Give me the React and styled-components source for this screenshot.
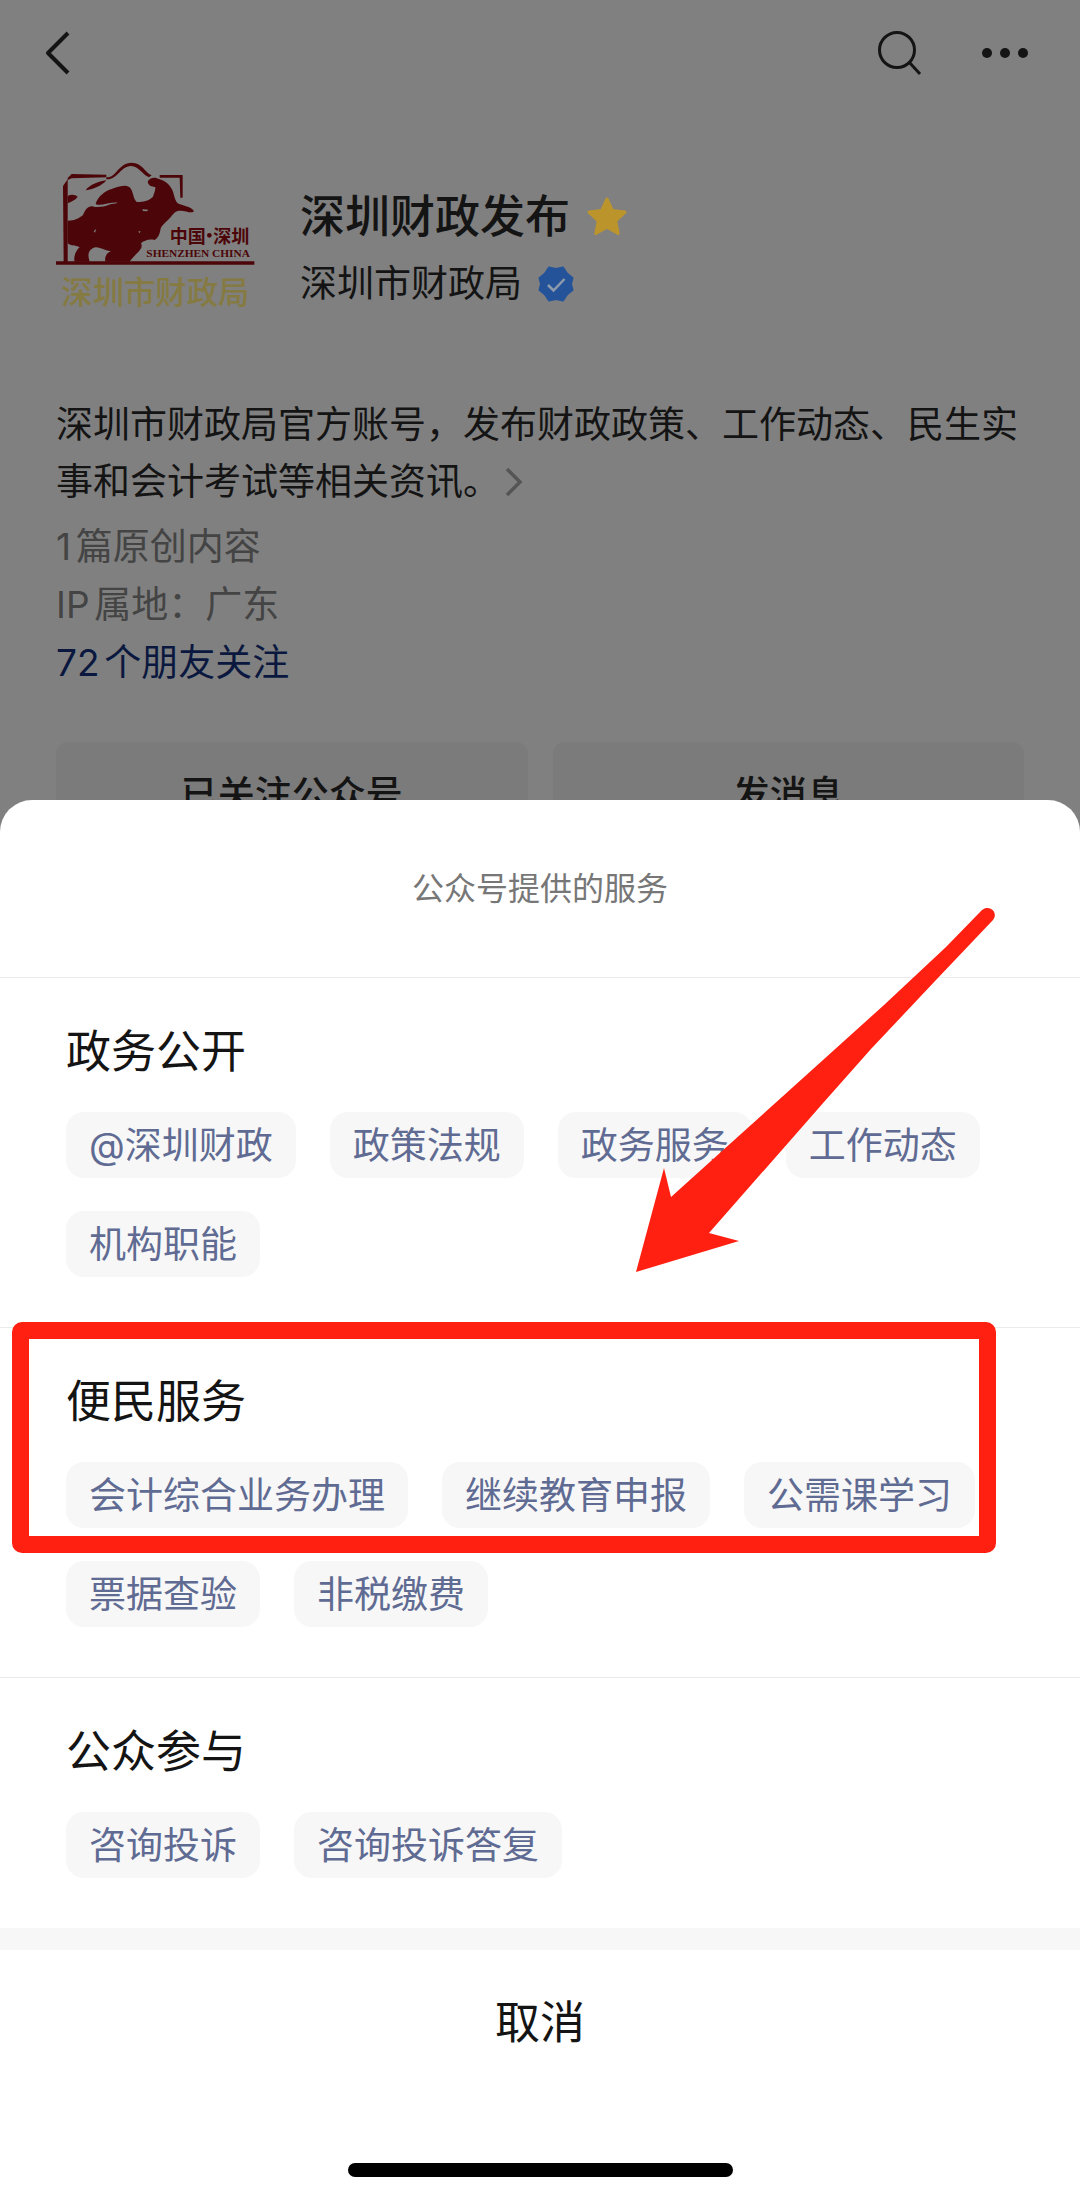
import React from 'react';
import styled, { createGlobalStyle } from 'styled-components';

const colors = {
	dimmed: '#808080',
	dimmedButton: '#7b7b7b',
	ink: '#141414',
	inkSoft: '#444',
	navy: '#0a183f',
	chip: '#f7f7f7',
	chipText: '#5f6b92',
	line: '#ebebeb',
	red: '#ff2012',
	logoRed: '#4c0609',
	logoGold: '#857a42',
};

const GlobalStyle = createGlobalStyle`
	* {
		box-sizing: border-box;
	}
	body {
		margin: 0;
		background-color: ${colors.dimmed};
		font-family: Inter, 'Noto Sans CJK SC', sans-serif;
		color: ${colors.ink};
		text-autospace: normal;
	}
	button {
		font: inherit;
		line-height: 1;
		color: inherit;
		border: none;
		background: none;
		padding: 0;
	}
	h1, h2, h3, p {
		margin: 0;
		font-weight: 400;
	}
	svg {
		display: block;
		flex-shrink: 0;
	}
`;

const Screen = styled.div`
	min-height: 100vh;
	display: flex;
	flex-direction: column;
	overflow: hidden;
`;

const NavBar = styled.nav`
	height: 105px;
	padding: 0 50px 0 42px;
	display: flex;
	align-items: center;
`;

const NavButton = styled.button`
	display: flex;
`;

const NavGroup = styled.div`
	display: flex;
	align-items: center;
	gap: 58px;
	margin-left: auto;
`;

const Profile = styled.main`
	padding: 55px 56px 0;
`;

const Identity = styled.header`
	display: flex;
	align-items: flex-start;
	gap: 44px;
`;

const Names = styled.div`
	display: flex;
	flex-direction: column;
	gap: 12px;
	padding-top: 27px;
`;

const NameRow = styled.div`
	display: flex;
	align-items: center;
	gap: 16px;
`;

const AccountName = styled.h1`
	font-size: 45px;
	line-height: 60px;
	font-weight: 500;
`;

const Owner = styled.p`
	font-size: 37px;
	line-height: 50px;
`;

const Description = styled.p`
	margin-top: 83px;
	font-size: 37px;
	line-height: 57px;

	svg {
		display: inline-block;
		margin-left: 4px;
		vertical-align: -3px;
	}
`;

const Meta = styled.div`
	display: flex;
	flex-direction: column;
	align-items: flex-start;
	margin-top: 8px;
	font-size: 37px;
	line-height: 58px;
	color: ${colors.inkSoft};
`;

const FriendsLink = styled.a`
	color: ${colors.navy};
	text-decoration: none;
`;

const Actions = styled.div`
	display: grid;
	grid-template-columns: 1fr 1fr;
	gap: 25px;
	margin-top: 50px;
`;

const ActionButton = styled.button`
	height: 105px;
	border-radius: 12px;
	background-color: ${colors.dimmedButton};
	font-size: 37px;
	font-weight: 500;
`;

// slides over the lower half of the action buttons
const Sheet = styled.section`
	position: relative;
	flex: 1;
	display: flex;
	flex-direction: column;
	margin-top: -47px;
	border-radius: 32px 32px 0 0;
	background-color: #fff;
`;

const SheetTitle = styled.h2`
	display: flex;
	align-items: center;
	justify-content: center;
	height: 177px;
	font-size: 32px;
	line-height: 1;
	color: #777;
`;

const Group = styled.section`
	position: relative;
	padding: 44px 66px 50px;
	border-top: 1px solid ${colors.line};
`;

const GroupTitle = styled.h3`
	margin-bottom: 30px;
	font-size: 45px;
	line-height: 60px;
`;

const Chips = styled.div`
	display: flex;
	flex-wrap: wrap;
	gap: 33px 34px;
`;

const Chip = styled.button`
	height: 66px;
	padding: 0 23px;
	border-radius: 18px;
	background-color: ${colors.chip};
	font-size: 37px;
	color: ${colors.chipText};
	white-space: nowrap;
`;

const Highlight = styled.div`
	position: absolute;
	top: -6px;
	left: 12px;
	width: 984px;
	height: 231px;
	border: 17px solid ${colors.red};
	border-radius: 10px;
	pointer-events: none;
`;

const ArrowMark = styled.svg`
	position: absolute;
	top: 99px;
	left: 630px;
	z-index: 1;
	pointer-events: none;
`;

const Cancel = styled.button`
	height: 167px;
	border-top: 22px solid ${colors.chip};
	font-size: 45px;
`;

const HomeBar = styled.div`
	width: 385px;
	height: 14px;
	margin: auto auto 18px;
	border-radius: 7px;
	background-color: #000;
`;

const groups = [
	{
		title: '政务公开',
		items: ['@深圳财政', '政策法规', '政务服务', '工作动态', '机构职能'],
	},
	{
		title: '便民服务',
		items: ['会计综合业务办理', '继续教育申报', '公需课学习', '票据查验', '非税缴费'],
		highlighted: true,
	},
	{
		title: '公众参与',
		items: ['咨询投诉', '咨询投诉答复'],
	},
];

const BackIcon = () => (
	<svg width='32' height='48' viewBox='0 0 32 48' fill='none'>
		<path d='M26 4 6 24l20 20' stroke={colors.ink} strokeWidth='4' strokeLinejoin='round' />
	</svg>
);

const SearchIcon = () => (
	<svg width='46' height='48' viewBox='0 0 46 48' fill='none' stroke={colors.ink} strokeWidth='3'>
		<circle cx='21' cy='21' r='17.500' />
		<path d='M33 33l11 12' />
	</svg>
);

const MoreIcon = () => (
	<svg width='50' height='12' viewBox='0 0 50 12' fill={colors.ink}>
		<circle cx='7' cy='6' r='5' />
		<circle cx='25' cy='6' r='5' />
		<circle cx='43' cy='6' r='5' />
	</svg>
);

const StarIcon = () => (
	<svg width='42' height='42' viewBox='0 0 42 42'>
		<path
			d='M21 3l5.400 11.600 12.600 1.500-9.300 8.700 2.500 12.700L21 31.200 9.800 37.500l2.500-12.700L3 16.100l12.600-1.500z'
			fill='#bb952b'
			stroke='#bb952b'
			strokeWidth='3'
			strokeLinejoin='round'
		/>
	</svg>
);

const VerifiedIcon = () => (
	<svg width='36' height='38' viewBox='0 0 36 38'>
		<path
			d='M11 2.500 18 4l7-1.500 4 6 5.500 4.500-1.500 6 1.500 6-5.500 4.500-4 6L18 34l-7 1.500-4-6L1.500 25 3 19l-1.500-6L7 8.500z'
			fill='#24539a'
			stroke='#24539a'
			strokeWidth='2'
			strokeLinejoin='round'
		/>
		<path d='M10 20l5.500 5.500L26.500 14' fill='none' stroke='#8f9bad' strokeWidth='2.500' />
	</svg>
);

const ChevronIcon = () => (
	<svg width='20' height='32' viewBox='0 0 20 32' fill='none'>
		<path d='M3 3l13 13L3 29' stroke='#555' strokeWidth='3.500' />
	</svg>
);

const Logo = () => (
	<svg width='200' height='153' viewBox='47 30 600 459' role='img' aria-label='深圳市财政局'>
		<g fill={colors.logoRed}>
			<path d='M68 108l14-20v248H70z' />
			<path d='M82 84l12-12 104 2v8l-104 3-12 5z' />
			<path d='M82 138c10-6 22-5 30 2-6 10-18 14-30 20z' />
			<path d='M136 121c10-16 38-26 62-30-12 16-38 26-62 30z' />
			<path d='M198 82c30 2 34-42 76-44 32 0 38 28 60 38l-8 6c-20-8-30-34-54-34-34 2-40 42-74 40z' />
			<path d='M358 75h69v68h-7l-2-60h-60z' />
			<path d='M45 334h597v10H45z' />
			<path d='M322 95c6-13 22-15 36-7 18 4 34 20 40 37 4 15 7 27 14 35 18 8 40 9 49 24-8 8-24-2-41-2-15 0-20 8-28 18-12 15-30 25-32 40s-10 28-18 30c-17-4-32 3-40 10 6 10-2 20-12 30s-18 18-22 25h-73c-3-15 5-27 17-31-22-4-37-14-47-12-20 6-25 20-17 43h-45c-5-15 5-35 15-43-13-7-23-2-36-12v-68c23 0 33-7 46-17 7-17 17-30 32-25 16 2 32 0 46-6 10-4 18-2 26-6-22-2-54 12-66 4 4-17 19-32 39-42 20-8 50-20 63-8 12 13 9 31 20 43 22 3 40-5 50-15 6-15 7-22 7-28-4-4-20 0-23-17z' />
		</g>
		<g fill={colors.dimmed}>
			<path d='M306 178l18 1-4 5-12-1z' />
			<path d='M160 244l8-8-4 12z' />
			<path d='M294 244l7 0-4 6z' />
		</g>
		<g fill={colors.logoRed} fontFamily="'Noto Sans CJK SC', sans-serif" fontWeight='700' fontSize='54'>
			<text x='388' y='278'>中国</text>
			<text x='519' y='278'>深圳</text>
			<circle cx='507' cy='256' r='7' />
		</g>
		<text
			x='318'
			y='321'
			fill={colors.logoRed}
			fontFamily="'Liberation Serif', serif"
			fontWeight='700'
			fontSize='34'
		>
			SHENZHEN CHINA
		</text>
		<text
			x='63'
			y='462'
			fill={colors.logoGold}
			fontFamily="'Noto Sans CJK SC', sans-serif"
			fontWeight='500'
			fontSize='94'
		>
			深圳市财政局
		</text>
	</svg>
);

const Arrow = () => (
	<ArrowMark width='372' height='380' viewBox='0 0 372 380' aria-hidden='true'>
		<path
			d='M6 373l28-104 7 29 162-146 51-46 62-58 36-37c7-6 17 2 11 10l-57 60-65 69-47 53L79 334l30 8z'
			fill={colors.red}
		/>
	</ArrowMark>
);

const App = () => {
	return (
		<>
			<GlobalStyle />
			<Screen>
				<NavBar>
					<NavButton aria-label='返回'>
						<BackIcon />
					</NavButton>
					<NavGroup>
						<NavButton aria-label='搜索'>
							<SearchIcon />
						</NavButton>
						<NavButton aria-label='更多'>
							<MoreIcon />
						</NavButton>
					</NavGroup>
				</NavBar>
				<Profile>
					<Identity>
						<Logo />
						<Names>
							<NameRow>
								<AccountName>深圳财政发布</AccountName>
								<StarIcon />
							</NameRow>
							<NameRow>
								<Owner>深圳市财政局</Owner>
								<VerifiedIcon />
							</NameRow>
						</Names>
					</Identity>
					<Description>
						深圳市财政局官方账号，发布财政政策、工作动态、民生实事和会计考试等相关资讯。
						<ChevronIcon />
					</Description>
					<Meta>
						<span>1篇原创内容</span>
						<span>IP属地：广东</span>
						<FriendsLink href='#friends'>72个朋友关注</FriendsLink>
					</Meta>
					<Actions>
						<ActionButton>已关注公众号</ActionButton>
						<ActionButton>发消息</ActionButton>
					</Actions>
				</Profile>
				<Sheet>
					<SheetTitle>公众号提供的服务</SheetTitle>
					{groups.map((group) => (
						<Group key={group.title}>
							<GroupTitle>{group.title}</GroupTitle>
							<Chips>
								{group.items.map((item) => (
									<Chip key={item}>{item}</Chip>
								))}
							</Chips>
							{group.highlighted && <Highlight />}
						</Group>
					))}
					<Cancel>取消</Cancel>
					<HomeBar />
					<Arrow />
				</Sheet>
			</Screen>
		</>
	);
};

export default App;
